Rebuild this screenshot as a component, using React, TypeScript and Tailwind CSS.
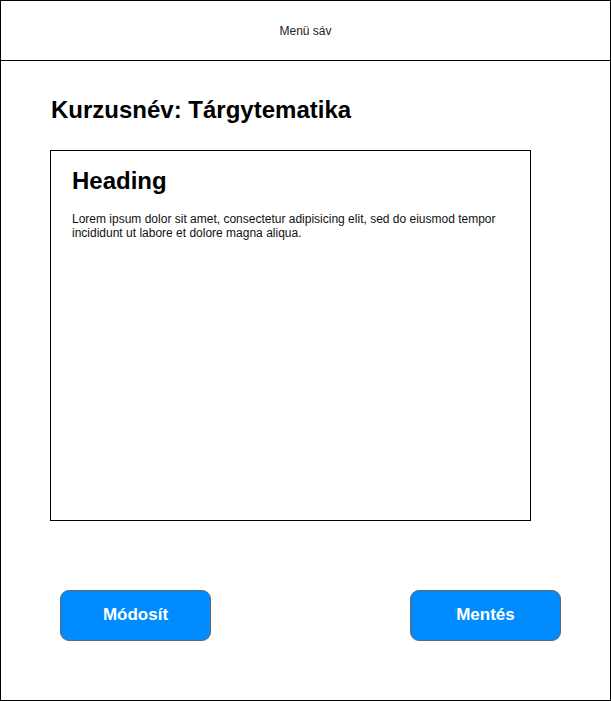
import React from "react";

export default function App() {
  return (
    <div
      className="w-[611px] h-[701px] border border-black bg-white flex flex-col text-black"
      style={{ fontFamily: '"Liberation Sans", Arial, sans-serif' }}
    >
      {/* menu bar */}
      <div className="h-[60px] shrink-0 border-b border-black flex items-center justify-center text-[12px] text-[#222]">
        Menü sáv
      </div>

      <div className="pl-[49px] pt-[35px]">
        <h1 className="pl-[1px] text-[24px] leading-[27px] font-bold">Kurzusnév: Tárgytematika</h1>

        <div className="mt-[27px] w-[481px] h-[371px] border border-black px-[21px] pt-[16px]">
          <h2 className="text-[24px] leading-[28px] font-bold">Heading</h2>
          <p className="mt-[17px] text-[12px] leading-[14px] text-[#111]">
            Lorem ipsum dolor sit amet, consectetur adipisicing elit, sed do eiusmod tempor incididunt ut labore et
            dolore magna aliqua.
          </p>
        </div>
      </div>

      <div className="mt-[69px] pl-[59px] pr-[49px] flex justify-between">
        <button className="w-[151px] h-[51px] pb-[2px] rounded-[9px] bg-[#008cff] border border-[#666666] text-white font-bold text-[17px]">
          Módosít
        </button>
        <button className="w-[151px] h-[51px] pb-[2px] rounded-[9px] bg-[#008cff] border border-[#666666] text-white font-bold text-[17px]">
          Mentés
        </button>
      </div>
    </div>
  );
}
